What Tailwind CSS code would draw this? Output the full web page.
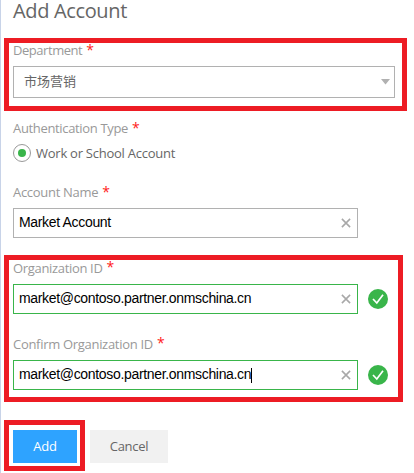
<!DOCTYPE html>
<html lang="en">
<head>
<meta charset="utf-8">
<title>Add Account</title>
<script src="https://cdn.jsdelivr.net/npm/@tailwindcss/browser@4"></script>
</head>
<body class="bg-white">
<main class="flex h-[473px] w-[414px] flex-col items-start overflow-hidden border-l border-[#c8d3e8] pl-[3px] font-['Open_Sans','Noto_Sans_CJK_SC',sans-serif] text-[13px] text-[#666]">
  <h1 class="h-[38px] pl-[9px] text-[20px] leading-[22px] whitespace-nowrap"><span class="tracking-[-0.35px]">Add Account</span></h1>

  <section class="h-[73px] w-[403px] border-5 border-[#ed1c24] pl-1">
    <label class="flex h-[23px] items-start gap-1 leading-[15px] text-[#999]"><span class="tracking-[-0.45px]">Department</span><span class="text-[14px] leading-[14px] font-medium text-[#ff1a1a]">*</span></label>
    <div class="flex h-8 w-[382px] items-center justify-between border border-[#b1b1b1] pr-1 pl-[10px]">
      <span class="font-['Noto_Sans_CJK_SC',sans-serif] text-[13px] leading-[28px] -mt-[2px]">市场营销</span>
      <svg class="h-[6px] w-[9px]" viewBox="0 0 9 6"><path d="M0 0h9L4.5 5.5z" fill="#b1b1b1"/></svg>
    </div>
  </section>

  <section class="h-[70px] pt-[10px] pl-[9px]">
    <div class="flex h-[23px] items-start gap-1 leading-[15px] text-[#999]"><span class="tracking-[-0.34px]">Authentication Type</span><span class="text-[14px] leading-[14px] font-medium text-[#ff1a1a]">*</span></div>
    <div class="flex h-[18px] items-center gap-[5px]">
      <span class="flex size-[18px] items-center justify-center rounded-full border border-[#999]"><span class="size-2 rounded-full bg-[#39b54a]"></span></span>
      <span class="pt-px tracking-[-0.25px]">Work or School Account</span>
    </div>
  </section>

  <section class="h-[74px] pt-[4px] pl-[9px]">
    <label class="flex h-[23px] items-start gap-1 leading-[15px] text-[#999]"><span class="tracking-[-0.3px]">Account Name</span><span class="text-[14px] leading-[14px] font-medium text-[#ff1a1a]">*</span></label>
    <div class="flex h-[30px] w-[345px] items-center justify-between border border-[#b1b1b1] pr-[6px] pl-[5px] font-['Liberation_Sans',sans-serif] text-[14px] tracking-[-0.33px] text-black">
      <span class="pb-px">Market Account</span>
      <svg class="size-[10px]" viewBox="0 0 11 11" fill="none" stroke="#a8a8a8" stroke-width="1.7"><path d="M1 1l9 9M10 1l-9 9"/></svg>
    </div>
  </section>

  <section class="h-[147px] w-[399px] border-5 border-[#ed1c24] pl-1">
    <label class="flex h-[24px] items-start gap-1 leading-[16px] text-[#999]"><span class="tracking-[-0.33px]">Organization ID</span><span class="text-[14px] leading-[14px] font-medium text-[#ff1a1a]">*</span></label>
    <div class="flex items-center gap-[10px]">
      <div class="flex h-[30px] w-[345px] items-center justify-between border border-[#39b54a] pr-[6px] pl-[5px] font-['Liberation_Sans',sans-serif] text-[14px] tracking-[-0.33px] text-black">
        <span class="pb-px">market@contoso.partner.onmschina.cn</span>
        <svg class="size-[10px]" viewBox="0 0 11 11" fill="none" stroke="#a8a8a8" stroke-width="1.7"><path d="M1 1l9 9M10 1l-9 9"/></svg>
      </div>
      <svg class="size-5" viewBox="0 0 20 20"><circle cx="10" cy="10" r="10" fill="#39b54a"/><path d="M5 10l3.8 4L15 5.8" fill="none" stroke="#fff" stroke-width="1.7"/></svg>
    </div>
    <label class="mt-[22px] flex h-[24px] items-start gap-1 leading-[16px] text-[#999]"><span class="tracking-[-0.3px]">Confirm Organization ID</span><span class="text-[14px] leading-[14px] font-medium text-[#ff1a1a]">*</span></label>
    <div class="flex items-center gap-[10px]">
      <div class="flex h-[30px] w-[345px] items-center justify-between border border-[#39b54a] pr-[6px] pl-[5px] font-['Liberation_Sans',sans-serif] text-[14px] tracking-[-0.33px] text-black">
        <span class="flex items-center"><span class="pb-px">market@contoso.partner.onmschina.cn</span><span class="h-[15px] w-px bg-black"></span></span>
        <svg class="size-[10px]" viewBox="0 0 11 11" fill="none" stroke="#a8a8a8" stroke-width="1.7"><path d="M1 1l9 9M10 1l-9 9"/></svg>
      </div>
      <svg class="size-5" viewBox="0 0 20 20"><circle cx="10" cy="10" r="10" fill="#39b54a"/><path d="M5 10l3.8 4L15 5.8" fill="none" stroke="#fff" stroke-width="1.7"/></svg>
    </div>
  </section>

  <div class="mt-[18px] flex items-start gap-[5px]">
    <div class="flex h-[51px] w-[81px] border-5 border-[#ed1c24] pt-[5px] pl-1">
      <button class="h-[33px] w-16 bg-[#2ea3ff] pt-px text-white"><span class="tracking-[-0.2px]">Add</span></button>
    </div>
    <button class="mt-[10px] h-[33px] w-[78px] bg-[#f1f1f1] pt-px"><span class="tracking-[-0.3px]">Cancel</span></button>
  </div>
</main>
</body>
</html>
